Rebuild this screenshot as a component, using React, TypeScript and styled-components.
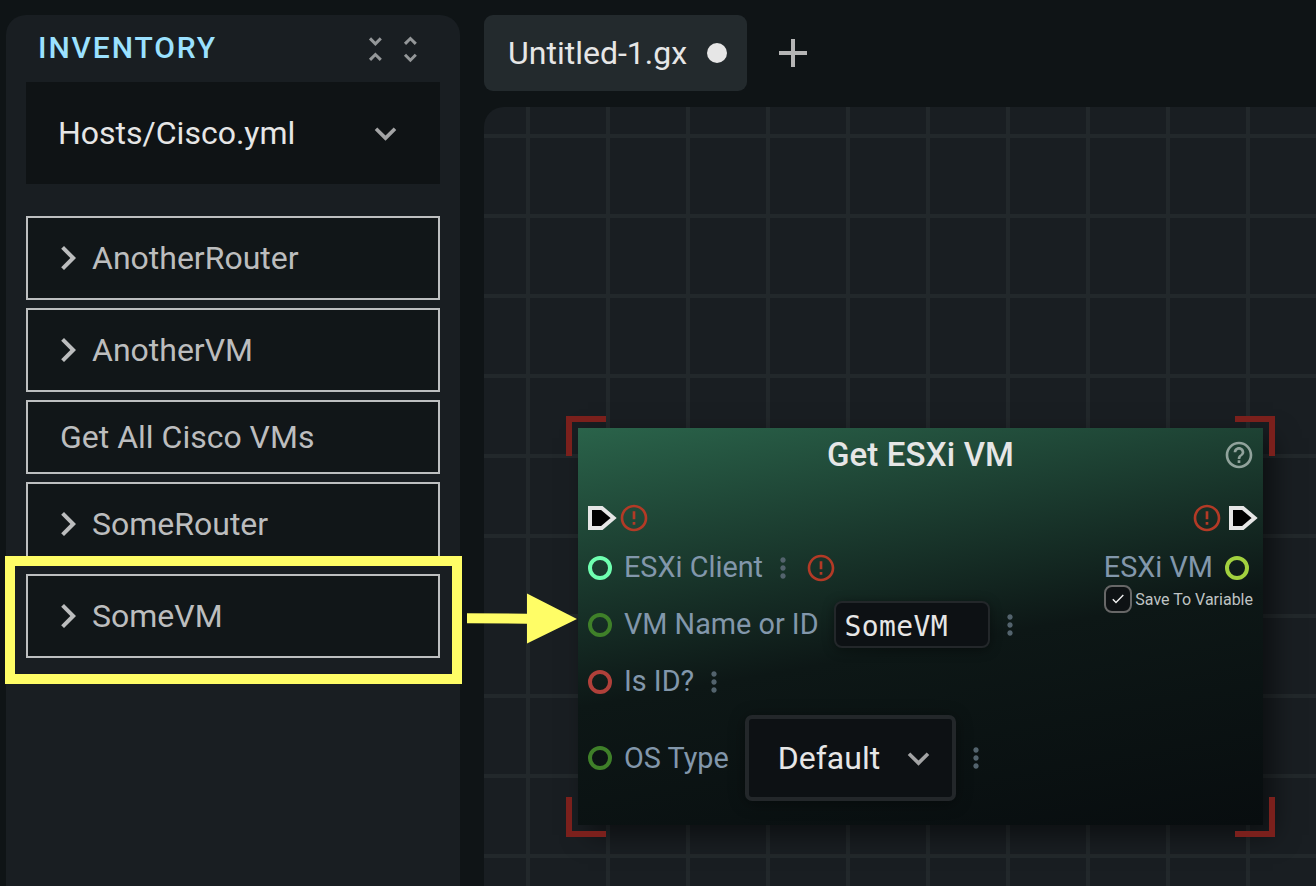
import React from "react";
import styled, { createGlobalStyle } from "styled-components";
import {
  MdAdd,
  MdChevronRight,
  MdErrorOutline,
  MdExpandMore,
  MdHelpOutline,
  MdMoreVert,
} from "react-icons/md";

const Global = createGlobalStyle`
  * { box-sizing: border-box; }
  body {
    margin: 0;
    background: #0f1416;
    color: #e6e6e6;
    font-family: Roboto, "Liberation Sans", sans-serif;
    overflow: hidden;
  }
  svg { display: block; flex: none; }
`;

const Page = styled.div`
  position: relative;
  display: flex;
  gap: 24px;
  width: 1316px;
  height: 886px;
  padding: 15px 0 0 6px;
  overflow: hidden;
`;

const Sidebar = styled.aside`
  flex: none;
  width: 454px;
  padding: 0 20px;
  background: #191e22;
  border-radius: 20px 20px 0 0;
`;

const SidebarHeader = styled.header`
  display: flex;
  align-items: center;
  height: 67px;
  padding: 0 22px 0 12px;
`;

const Heading = styled.h2`
  flex: 1;
  margin: 0;
  padding-bottom: 1px;
  font-size: 30px;
  line-height: 36px;
  font-weight: 500;
  letter-spacing: 1.9px;
  color: #9be1ff;
`;

const FoldIcons = styled.div`
  display: flex;
  gap: 19px;
  color: #949799;
`;

const FileSelect = styled.div`
  display: flex;
  align-items: center;
  justify-content: space-between;
  height: 102px;
  padding: 0 33px 0 32px;
  background: #0f1315;
  font-size: 32px;
  color: #e6e6e6;
  svg { color: #a3a4a5; }
`;

const HostList = styled.div`
  display: flex;
  flex-direction: column;
  gap: 8px;
  margin-top: 32px;
`;

const HostRow = styled.div<{ $leaf?: boolean }>`
  display: flex;
  align-items: center;
  height: ${(p) => (p.$leaf ? 74 : 84)}px;
  padding-left: ${(p) => (p.$leaf ? 32 : 16)}px;
  border: 2px solid #bdbfc0;
  background: #111618;
  font-size: 32px;
  color: #bcbdbe;
`;

const Main = styled.main`
  flex: 1;
  min-width: 0;
  display: flex;
  flex-direction: column;
  gap: 16px;
`;

const Tabs = styled.div`
  display: flex;
  align-items: center;
  gap: 22px;
  height: 76px;
  color: #b5b5b5;
`;

const Tab = styled.div`
  display: flex;
  align-items: center;
  justify-content: space-between;
  width: 263px;
  height: 76px;
  padding: 0 20px 0 24px;
  border-radius: 9px;
  background: #232a2d;
  color: #e6e6e6;
  font-size: 32px;
`;

const UnsavedDot = styled.span`
  width: 20px;
  height: 20px;
  border-radius: 50%;
  background: #e6e6e6;
`;

const Canvas = styled.section`
  position: relative;
  flex: 1;
  overflow: hidden;
  border-radius: 20px 0 0 0;
  background-color: #191e22;
  background-image: linear-gradient(#22282b 4px, transparent 4px),
    linear-gradient(90deg, #22282b 4px, transparent 4px);
  background-size: 80px 80px;
  background-position: 42px 27px;
`;

const NodeFrame = styled.div`
  position: absolute;
  left: 82px;
  top: 309px;
  width: 709px;
  height: 421px;
  padding: 12px;
`;

const Corner = styled.i<{ $x: "left" | "right"; $y: "top" | "bottom" }>`
  position: absolute;
  ${(p) => p.$x}: 0;
  ${(p) => p.$y}: 0;
  width: 40px;
  height: 40px;
  border: 0 solid #7b201c;
  border-${(p) => p.$x}-width: 6px;
  border-${(p) => p.$y}-width: 6px;
`;

const Node = styled.article`
  position: relative;
  height: 397px;
  background: linear-gradient(170deg, #2a634a 0%, #0d1716 54%, #080d0f 100%);
  box-shadow: 10px 10px 24px rgba(0, 0, 0, 0.5);
`;

const NodeHeader = styled.header`
  display: flex;
  align-items: center;
  height: 54px;
  padding: 0 8px 0 40px;
  svg { color: #91a39c; }
`;

const NodeTitle = styled.h3`
  flex: 1;
  margin: 0;
  text-align: center;
  font-size: 33px;
  line-height: 38px;
  font-weight: 500;
  letter-spacing: 0.15px;
  color: #e6e6e6;
`;

const NodeBody = styled.div`
  display: flex;
  justify-content: space-between;
  padding: 11px 5px 0 10px;
`;

const Ports = styled.div<{ $end?: boolean }>`
  display: flex;
  flex-direction: column;
  align-items: ${(p) => (p.$end ? "flex-end" : "flex-start")};
`;

const PortRow = styled.div<{ $h: number; $end?: boolean }>`
  display: flex;
  align-items: center;
  height: ${(p) => p.$h}px;
  padding-right: ${(p) => (p.$end ? 9 : 0)}px;
`;

const PinSlot = styled.span`
  margin-left: 6px;
`;

const Ring = styled.span<{ $color: string }>`
  width: 24px;
  height: 24px;
  border: 4px solid ${(p) => p.$color};
  border-radius: 50%;
`;

const PortLabel = styled.span<{ $out?: boolean; $lift?: number }>`
  margin: ${(p) => (p.$out ? "0 12px 0 0" : "0 0 0 12px")};
  padding-bottom: ${(p) => p.$lift ?? 2}px;
  font-size: 28.8px;
  line-height: 34px;
  color: #8297ab;
  white-space: nowrap;
`;

const Menu = styled(MdMoreVert)`
  margin-left: 4px;
  color: #53636d;
`;

const Warning = styled(MdErrorOutline)<{ $gap?: number }>`
  margin-left: ${(p) => p.$gap ?? 0}px;
  color: #b33a26;
`;

const TextInput = styled.div`
  display: flex;
  align-items: center;
  width: 156px;
  height: 47px;
  margin: -1px 0 0 15px;
  padding: 4px 0 0 9px;
  border: 2px solid #23272a;
  border-radius: 8px;
  background: #0d1114;
  box-shadow: 0 2px 12px rgba(0, 0, 0, 0.4);
  font-family: "DejaVu Sans Mono", monospace;
  font-size: 28px;
  line-height: 34px;
  letter-spacing: 0.4px;
  color: #e6e6e6;
`;

const Select = styled.div`
  display: flex;
  align-items: center;
  justify-content: space-between;
  width: 211px;
  height: 86px;
  margin-left: 16px;
  padding: 0 12px 0 29px;
  border: 4px solid #23272a;
  border-radius: 7px;
  background: #0d1114;
  box-shadow: 0 2px 16px rgba(0, 0, 0, 0.4);
  font-size: 32px;
  color: #e6e6e6;
  svg { color: #a3a4a5; }
`;

const SaveRow = styled.div`
  display: flex;
  align-items: center;
  gap: 3px;
  height: 28px;
  margin-top: -8px;
  padding-right: 5px;
  font-size: 16px;
  color: #bfc3c3;
`;

const Checkbox = styled.span`
  display: grid;
  place-items: center;
  width: 28px;
  height: 28px;
  border: 2px solid #676767;
  border-radius: 8px;
  background: #0e1214;
`;

const Highlight = styled.div`
  position: absolute;
  left: 5px;
  top: 556px;
  width: 457px;
  height: 128px;
  border: 10px solid #fffd66;
`;

const Arrow = styled.svg`
  position: absolute;
  left: 467px;
  top: 593px;
`;

const FoldLess = () => (
  <svg width="16" height="29" viewBox="0 0 16 29" fill="none" stroke="currentColor" strokeWidth="3">
    <path d="M3 4.4l5.4 5.4 5.4-5.4M3 25.9l5.4-5.4 5.4 5.4" />
  </svg>
);

const FoldMore = () => (
  <svg width="16" height="29" viewBox="0 0 16 29" fill="none" stroke="currentColor" strokeWidth="3">
    <path d="M3 9.9l5.4-5.4 5.4 5.4M3 20.8l5.4 5.4 5.4-5.4" />
  </svg>
);

const ExecPin = () => (
  <svg width="29" height="24" viewBox="0 0 29 24">
    <path d="M2 2H13.8L25.6 12L13.8 22H2Z" fill="#000" stroke="#e6e6e6" strokeWidth="4" />
  </svg>
);

const hosts = [
  { name: "AnotherRouter" },
  { name: "AnotherVM" },
  { name: "Get All Cisco VMs", leaf: true },
  { name: "SomeRouter" },
  { name: "SomeVM" },
];

export default function App() {
  return (
    <>
      <Global />
      <Page>
        <Sidebar>
          <SidebarHeader>
            <Heading>INVENTORY</Heading>
            <FoldIcons>
              <FoldLess />
              <FoldMore />
            </FoldIcons>
          </SidebarHeader>
          <FileSelect>
            <span>Hosts/Cisco.yml</span>
            <MdExpandMore size={43} />
          </FileSelect>
          <HostList>
            {hosts.map((h) => (
              <HostRow key={h.name} $leaf={h.leaf}>
                {!h.leaf && <MdChevronRight size={48} />}
                <span>{h.name}</span>
              </HostRow>
            ))}
          </HostList>
        </Sidebar>
        <Main>
          <Tabs>
            <Tab>
              <span>Untitled-1.gx</span>
              <UnsavedDot />
            </Tab>
            <MdAdd size={48} />
          </Tabs>
          <Canvas>
            <NodeFrame>
              <Node>
                <NodeHeader>
                  <NodeTitle>Get ESXi VM</NodeTitle>
                  <MdHelpOutline size={32} />
                </NodeHeader>
                <NodeBody>
                  <Ports>
                    <PortRow $h={50}>
                      <ExecPin />
                      <Warning size={32} $gap={1} />
                    </PortRow>
                    <PortRow $h={50}>
                      <Ring $color="#6fffb0" />
                      <PortLabel>ESXi Client</PortLabel>
                      <Menu size={32} />
                      <Warning size={32} $gap={6} />
                    </PortRow>
                    <PortRow $h={64}>
                      <Ring $color="#3f8029" />
                      <PortLabel>VM Name or ID</PortLabel>
                      <TextInput>SomeVM</TextInput>
                      <Menu size={32} />
                    </PortRow>
                    <PortRow $h={50}>
                      <Ring $color="#b0403a" />
                      <PortLabel>Is ID?</PortLabel>
                      <Menu size={32} />
                    </PortRow>
                    <PortRow $h={102}>
                      <Ring $color="#3f8029" />
                      <PortLabel $lift={0}>OS Type</PortLabel>
                      <Select>
                        <span>Default</span>
                        <MdExpandMore size={43} />
                      </Select>
                      <Menu size={32} />
                    </PortRow>
                  </Ports>
                  <Ports $end>
                    <PortRow $h={50}>
                      <Warning size={32} />
                      <PinSlot>
                        <ExecPin />
                      </PinSlot>
                    </PortRow>
                    <PortRow $h={50} $end>
                      <PortLabel $out>ESXi VM</PortLabel>
                      <Ring $color="#a2d13f" />
                    </PortRow>
                    <SaveRow>
                      <Checkbox>
                        <svg width="12" height="10" viewBox="0 0 12 10" fill="none" stroke="#f0f0f0" strokeWidth="1.4">
                          <path d="M.8 5.2L4 8.6 11.3.9" />
                        </svg>
                      </Checkbox>
                      <span>Save To Variable</span>
                    </SaveRow>
                  </Ports>
                </NodeBody>
              </Node>
              <Corner $x="left" $y="top" />
              <Corner $x="right" $y="top" />
              <Corner $x="left" $y="bottom" />
              <Corner $x="right" $y="bottom" />
            </NodeFrame>
          </Canvas>
        </Main>
        <Highlight />
        <Arrow width="110" height="52" viewBox="0 0 110 52" fill="#fffd66">
          <path d="M0 20.2L60 20.7V.5L110 26 60 50.5V30.7L0 30.2Z" />
        </Arrow>
      </Page>
    </>
  );
}
